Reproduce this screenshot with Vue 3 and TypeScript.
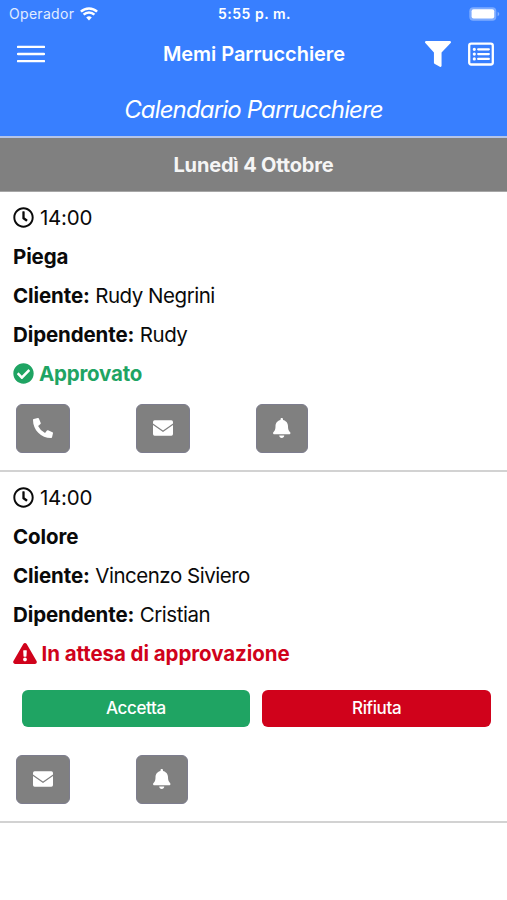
<script setup lang="ts">
interface IconDef {
  box: string
  path: string
}

interface Appointment {
  time: string
  service: string
  client: string
  employee: string
  approved: boolean
  actions: string[]
}

const icons: Record<string, IconDef> = {
  clock: {
    box: '0 0 512 512',
    path: 'M256 8C119 8 8 119 8 256s111 248 248 248 248-111 248-248S393 8 256 8zm0 448c-110.5 0-200-89.5-200-200S145.5 56 256 56s200 89.5 200 200-89.5 200-200 200zm61.8-104.4l-84.9-61.7c-3.1-2.3-4.9-5.9-4.9-9.7V116c0-6.6 5.4-12 12-12h32c6.6 0 12 5.4 12 12v141.7l66.8 48.6c5.4 3.9 6.5 11.4 2.6 16.8L334.6 349c-3.9 5.3-11.4 6.5-16.8 2.6z',
  },
  check: {
    box: '0 0 512 512',
    path: 'M504 256c0 136.967-111.033 248-248 248S8 392.967 8 256 119.033 8 256 8s248 111.033 248 248zM227.314 387.314l184-184c6.248-6.248 6.248-16.379 0-22.627l-22.627-22.627c-6.248-6.249-16.379-6.249-22.628 0L216 308.118l-70.059-70.059c-6.248-6.248-16.379-6.248-22.628 0l-22.627 22.627c-6.248 6.248-6.248 16.379 0 22.627l104 104c6.249 6.249 16.379 6.249 22.628.001z',
  },
  warning: {
    box: '0 0 576 512',
    path: 'M569.517 440.013C587.975 472.007 564.806 512 527.94 512H48.054c-36.937 0-59.999-40.055-41.577-71.987L246.423 23.985c18.467-32.009 64.72-31.951 83.154 0l239.94 416.028zM288 354c-25.405 0-46 20.595-46 46s20.595 46 46 46 46-20.595 46-46-20.595-46-46-46zm-43.673-165.346l7.418 136c.347 6.364 5.609 11.346 11.982 11.346h48.546c6.373 0 11.635-4.982 11.982-11.346l7.418-136c.375-6.874-5.098-12.654-11.982-12.654h-63.383c-6.884 0-12.356 5.78-11.981 12.654z',
  },
  phone: {
    box: '0 0 512 512',
    path: 'M497.39 361.8l-112-48a24 24 0 0 0-28 6.9l-49.6 60.6A370.66 370.66 0 0 1 130.6 204.11l60.6-49.6a23.94 23.94 0 0 0 6.9-28l-48-112A24.16 24.16 0 0 0 122.6.61l-104 24A24 24 0 0 0 0 48c0 256.5 207.9 464 464 464a24 24 0 0 0 23.4-18.6l24-104a24.29 24.29 0 0 0-14.01-27.6z',
  },
  mail: {
    box: '0 0 512 512',
    path: 'M42 60H470Q512 60 512 102V142L256 322 0 142V102Q0 60 42 60zM0 180L256 361 512 180V410Q512 452 470 452H42Q0 452 0 410z',
  },
  bell: {
    box: '0 0 448 512',
    path: 'M224 512c35.32 0 63.97-28.65 63.97-64H160.03c0 35.35 28.65 64 63.97 64zm215.39-149.71c-19.32-20.76-55.47-51.99-55.47-154.29 0-77.7-54.48-139.9-127.94-155.16V32c0-17.67-14.32-32-31.98-32s-31.98 14.33-31.98 32v20.84C118.56 68.1 64.08 130.3 64.08 208c0 102.3-36.15 133.53-55.47 154.29-6 6.45-8.66 14.16-8.61 21.71.11 16.4 12.98 32 32.1 32h383.8c19.12 0 32-15.6 32.1-32 .05-7.55-2.61-15.27-8.61-21.71z',
  },
}

const appointments: Appointment[] = [
  {
    time: '14:00',
    service: 'Piega',
    client: 'Rudy Negrini',
    employee: 'Rudy',
    approved: true,
    actions: ['phone', 'mail', 'bell'],
  },
  {
    time: '14:00',
    service: 'Colore',
    client: 'Vincenzo Siviero',
    employee: 'Cristian',
    approved: false,
    actions: ['mail', 'bell'],
  },
]
</script>

<template>
  <div class="screen">
    <header class="header">
      <div class="status-bar">
        <div class="carrier">
          <span class="carrier-name">Operador</span>
          <svg class="wifi" viewBox="0 0 18 14" fill="currentColor">
            <path d="M9 13.4 6.2 10.6a4 4 0 0 1 5.6 0z" />
            <path d="M3.6 7.7a7.8 7.8 0 0 1 10.8 0M.9 4.7a11.7 11.7 0 0 1 16.2 0" fill="none" stroke="currentColor" stroke-width="2.5" />
          </svg>
        </div>
        <span class="clock">5:55 p. m.</span>
        <div class="battery-wrap">
          <svg class="battery" viewBox="0 0 31 14">
            <rect x=".3" y=".2" width="27" height="13.6" rx="4" fill="#fff" fill-opacity=".35" />
            <rect x="2.6" y="2.2" width="22.6" height="9.4" rx="2" fill="#fff" />
            <path d="M28.6 4.8q1.7.7 1.7 2.2t-1.7 2.2z" fill="#fff" fill-opacity=".4" />
          </svg>
        </div>
      </div>
      <nav class="navbar">
        <div class="nav-side">
          <svg class="menu" viewBox="0 0 28 18">
            <path d="M1 1.9h26M1 9h26M1 16.1h26" stroke="#fff" stroke-width="2.4" stroke-linecap="round" />
          </svg>
        </div>
        <h1 class="nav-title">Memi Parrucchiere</h1>
        <div class="nav-side nav-actions">
          <svg class="filter" viewBox="0 0 512 512" fill="#fff">
            <path d="M488 0H24C3 0-8 26 7 41L176 226V430c0 8 4 15 10 20l106 58C308 518 326 507 326 488V226L505 41C520 26 509 0 488 0z" />
          </svg>
          <svg class="list" viewBox="0 0 26 24" fill="none" stroke="#fff">
            <rect x="1.2" y="1.7" width="23.6" height="20.8" rx="2" stroke-width="2.3" />
            <path d="M10.2 7.3h10.6M10.2 12.1h10.6M10.2 16.9h10.6" stroke-width="2.3" stroke-linecap="round" />
            <path d="M6.3 7.3h.01M6.3 12.1h.01M6.3 16.9h.01" stroke-width="3.2" stroke-linecap="round" />
          </svg>
        </div>
      </nav>
      <h2 class="subtitle">Calendario Parrucchiere</h2>
    </header>

    <div class="day"><span class="day-label">Lunedì 4 Ottobre</span></div>

    <article v-for="item in appointments" :key="item.service" class="appointment">
      <p class="row">
        <svg class="lead" :viewBox="icons.clock.box"><path :d="icons.clock.path" /></svg>
        <span class="time">{{ item.time }}</span>
      </p>
      <p class="row"><b>{{ item.service }}</b></p>
      <p class="row"><b>Cliente:</b><span class="value">{{ item.client }}</span></p>
      <p class="row"><b>Dipendente:</b><span class="value">{{ item.employee }}</span></p>
      <p v-if="item.approved" class="row approved">
        <svg class="lead" :viewBox="icons.check.box"><path :d="icons.check.path" /></svg>
        <b class="approved-label">Approvato</b>
      </p>
      <p v-else class="row pending">
        <svg class="lead wide" :viewBox="icons.warning.box"><path :d="icons.warning.path" /></svg>
        <b class="pending-label">In attesa di approvazione</b>
      </p>
      <div v-if="!item.approved" class="decisions">
        <button class="decision accept">Accetta</button>
        <button class="decision reject">Rifiuta</button>
      </div>
      <div class="actions">
        <div v-for="action in item.actions" :key="action" class="action-cell">
          <button :class="['action', action]">
            <svg class="action-icon" :viewBox="icons[action].box"><path :d="icons[action].path" /></svg>
          </button>
        </div>
      </div>
    </article>
  </div>
</template>

<style>
body {
  background: #fff;
}
</style>

<style scoped>
.screen {
  min-height: 900px;
  font-family: Inter, 'Liberation Sans', sans-serif;
  color: #0a0a0a;
  background: #fff;
}

.header {
  box-sizing: border-box;
  height: 138px;
  color: #fff;
  background: #387fff;
  border-bottom: 2px solid #b4c4e8;
}

.status-bar {
  display: grid;
  grid-template-columns: 1fr auto 1fr;
  align-items: center;
  height: 27px;
  padding: 0 7px 0 9px;
  font-size: 14px;
}

.carrier {
  display: flex;
  align-items: center;
  gap: 6px;
}

.carrier-name {
  letter-spacing: 0.3px;
  color: #e1ecff;
}

.wifi {
  width: 18px;
  height: 14px;
}

.clock {
  font-weight: 600;
  letter-spacing: 0.5px;
}

.battery-wrap {
  display: flex;
  justify-content: flex-end;
}

.battery {
  width: 31px;
  height: 14px;
}

.navbar {
  display: grid;
  grid-template-columns: 1fr auto 1fr;
  align-items: center;
  height: 54px;
  padding: 0 13px 0 14px;
}

.nav-side {
  display: flex;
  align-items: center;
}

.nav-actions {
  justify-content: flex-end;
  gap: 17px;
}

.menu {
  width: 28px;
  height: 18px;
  margin-left: 3px;
}

.filter {
  width: 26px;
  height: 26px;
}

.list {
  width: 26px;
  height: 24px;
}

.nav-title {
  margin: 0;
  font-size: 20px;
  font-weight: 600;
  letter-spacing: -0.05px;
}

.subtitle {
  margin: 0;
  font-size: 24px;
  font-style: italic;
  font-weight: 400;
  line-height: 58px;
  text-align: center;
  letter-spacing: -0.85px;
}

.day {
  box-sizing: border-box;
  display: flex;
  align-items: center;
  justify-content: center;
  height: 53.5px;
  padding-top: 1px;
  font-size: 20px;
  font-weight: 700;
  color: #f5f5f5;
  background: #808080;
  border-bottom: 1px solid #a6a6a6;
}

.day-label {
  letter-spacing: -0.17px;
}

.appointment {
  padding: 6px 13px 17px;
  border-bottom: 2px solid #d2d2d2;
}

.row {
  display: flex;
  align-items: center;
  height: 39px;
  margin: 0;
  font-size: 20.5px;
  letter-spacing: -0.48px;
  white-space: nowrap;
}

.row b {
  letter-spacing: -0.11px;
}

.row .pending-label {
  letter-spacing: -0.07px;
}

.row .approved-label {
  margin-left: -1px;
  letter-spacing: -0.22px;
}

.time {
  letter-spacing: -0.25px;
}

.value {
  margin-left: 5.5px;
}

.lead {
  width: 21px;
  height: 21px;
  margin-right: 6px;
  fill: currentColor;
}

.lead.wide {
  width: 24px;
  margin-right: 4.5px;
}

.approved {
  color: #1fa463;
}

.pending {
  color: #d0021b;
}

.decisions {
  display: grid;
  grid-template-columns: 1fr 1fr;
  gap: 12px;
  padding: 17px 3px 28px 8.5px;
}

.decision {
  height: 37px;
  padding: 0;
  font-family: inherit;
  font-size: 17px;
  font-weight: 500;
  letter-spacing: -0.4px;
  color: #fff;
  border: 0;
  border-radius: 6px;
}

.accept {
  background: #1fa463;
}

.reject {
  background: #d0021b;
}

.actions {
  display: flex;
  padding: 11px 0 0 2.5px;
}

.decisions + .actions {
  padding-top: 0;
}

.action-cell {
  width: 120.3px;
}

.action {
  display: flex;
  align-items: center;
  justify-content: center;
  width: 54.5px;
  height: 49px;
  padding: 0;
  background: #808080;
  border: 1px solid #7d7d8e;
  border-radius: 6px;
}

.action.bell {
  width: 52.3px;
}

.action-icon {
  height: 20px;
  fill: #fff;
}
</style>
